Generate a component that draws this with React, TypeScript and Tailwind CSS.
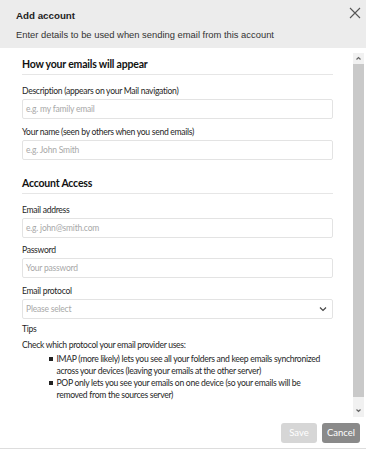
import React from "react";

const body = "font-['Lato','Open_Sans',sans-serif]";

function SectionHeading({ children, className = "" }: { children: React.ReactNode; className?: string }) {
  return (
    <div className={`border-b border-[#e6e6e6] pb-[3px] ${className}`}>
      <h2 className="text-[10.5px] font-bold leading-[14px] tracking-[-0.2px] text-[#111]">{children}</h2>
    </div>
  );
}

function Field({
  label,
  placeholder,
  className = "",
}: {
  label: string;
  placeholder: string;
  className?: string;
}) {
  return (
    <div className={className}>
      <p className="text-[8.6px] leading-[12px] tracking-[-0.3px] text-[#262626]">{label}</p>
      <div className="mt-[2px] flex h-[20px] items-center rounded-[2px] border border-[#e3e3e3] pl-[3px] text-[8.5px] tracking-[-0.2px] text-[#a8a8a8]">
        {placeholder}
      </div>
    </div>
  );
}

function FakeScrollbar() {
  return (
    <div className="mt-[5px] flex h-[364px] w-[11px] flex-col items-center bg-[#f1f1f1]">
      <svg width="7" height="7" viewBox="0 0 7 7" className="mt-[2px]">
        <path d="M1.5 4.5 L3.5 2.5 L5.5 4.5" fill="none" stroke="#666" strokeWidth="1.2" />
      </svg>
      <div className="mt-[2px] h-[333px] w-full bg-[#c9c9c9]" />
      <div className="flex-1" />
      <svg width="7" height="7" viewBox="0 0 7 7" className="mb-[3px]">
        <path d="M1.5 2.5 L3.5 4.5 L5.5 2.5" fill="none" stroke="#666" strokeWidth="1.2" />
      </svg>
    </div>
  );
}

export default function App() {
  const text = "text-[8.6px] leading-[12px] tracking-[-0.3px] text-[#262626]";
  return (
    <div className="flex h-[451px] w-[366px] flex-col overflow-hidden bg-white">
      <div className="relative h-[48px] bg-[#ececec] pl-[16px] font-['Liberation_Sans',Arial,sans-serif]">
        <p className="pt-[8px] text-[9.75px] font-bold leading-[15px] text-[#222]">Add account</p>
        <p className="mt-[5px] text-[9.4px] leading-[14px] text-[#333]">
          Enter details to be used when sending email from this account
        </p>
        <button className="absolute right-[5px] top-[7px] p-0">
          <svg width="12" height="12" viewBox="0 0 12 12">
            <path d="M1 1 L11 11 M11 1 L1 11" stroke="#555" strokeWidth="1.1" />
          </svg>
        </button>
      </div>

      <div className={`flex h-[369px] ${body}`}>
        <div className="w-[333px] overflow-hidden pl-[22px]">
          <SectionHeading className="mt-[9px]">How your emails will appear</SectionHeading>
          <Field className="mt-[10px]" label="Description (appears on your Mail navigation)" placeholder="e.g. my family email" />
          <Field className="mt-[7px]" label="Your name (seen by others when you send emails)" placeholder="e.g. John Smith" />

          <SectionHeading className="mt-[16px]">Account Access</SectionHeading>
          <Field className="mt-[10px]" label="Email address" placeholder="e.g. john@smith.com" />
          <Field className="mt-[6px]" label="Password" placeholder="Your password" />

          <div className="mt-[7px]">
            <p className={text}>Email protocol</p>
            <div className="mt-[2px] flex h-[20px] items-center justify-between rounded-[2px] border border-[#e3e3e3] pl-[3px] pr-[5px] text-[8.5px] tracking-[-0.2px] text-[#a8a8a8]">
              <span>Please select</span>
              <svg width="8" height="6" viewBox="0 0 8 6">
                <path d="M1 1.5 L4 4.5 L7 1.5" fill="none" stroke="#444" strokeWidth="1.2" />
              </svg>
            </div>
          </div>

          <p className={`mt-[4px] ${text}`}>Tips</p>
          <p className={`mt-[4px] ${text}`}>Check which protocol your email provider uses:</p>
          <ul className={`mt-[2px] pl-[27px] ${text}`}>
            <li className="flex whitespace-nowrap">
              <span className="mr-[4px] mt-[4px] h-[3.5px] w-[3.5px] shrink-0 bg-[#222]" />
              <span>
                IMAP (more likely) lets you see all your folders and keep emails synchronized
                <br />
                across your devices (leaving your emails at the other server)
              </span>
            </li>
            <li className="flex whitespace-nowrap">
              <span className="mr-[4px] mt-[4px] h-[3.5px] w-[3.5px] shrink-0 bg-[#222]" />
              <span>
                POP only lets you see your emails on one device (so your emails will be
                <br />
                removed from the sources server)
              </span>
            </li>
          </ul>
        </div>
        <div className="w-[20px]" />
        <FakeScrollbar />
      </div>

      <div className={`flex h-[31px] items-start justify-end gap-[5px] pr-[6px] pt-[6px] ${body}`}>
        <button className="h-[20px] w-[36px] rounded-[3px] bg-[#d6d6d6] text-[9.5px] text-white">Save</button>
        <button className="h-[20px] w-[38px] rounded-[3px] bg-[#8a8a8a] text-[9.5px] text-white">Cancel</button>
      </div>
      <div className="h-px bg-[#dddddd]" />
    </div>
  );
}
